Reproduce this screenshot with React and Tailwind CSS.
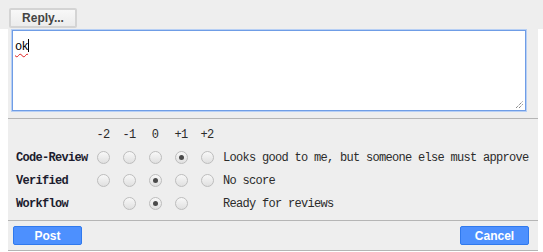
import React from "react";

const COLS = ["-2", "-1", "0", "+1", "+2"];

const ROWS = [
  { label: "Code-Review", opts: [true, true, true, true, true], sel: 3, text: "Looks good to me, but someone else must approve" },
  { label: "Verified", opts: [true, true, true, true, true], sel: 2, text: "No score" },
  { label: "Workflow", opts: [false, true, true, true, false], sel: 2, text: "Ready for reviews" },
];

const mono = "font-['Liberation_Mono','DejaVu_Sans_Mono',monospace] text-[12px] tracking-[-0.7px]";

function Radio({ checked }) {
  return (
    <span className="flex h-[13px] w-[13px] items-center justify-center rounded-full border border-[#bdbdbd] bg-gradient-to-b from-[#f8f8f8] to-[#e0e0e0]">
      {checked ? <span className="h-[5px] w-[5px] rounded-full bg-[#4a4a4a]" /> : null}
    </span>
  );
}

export default function App() {
  return (
    <div className="h-[252px] w-[543px] overflow-hidden bg-white font-['Liberation_Sans',Arial,sans-serif]">
      {/* top bar */}
      <div className="h-[29px] bg-[#eeeeee] pl-[9px] pt-[5px]">
        <button className="h-[20px] w-[68px] rounded-[2px] border-2 border-[#d4d4d4] bg-gradient-to-b from-[#f8f8f8] to-[#ececec] text-[12px] font-bold leading-none text-[#444]">
          Reply...
        </button>
      </div>

      <div className="ml-[8px] w-[530px] bg-[#eeeeee]">
        {/* message box */}
        <div className="border-b border-[#b5b5b5] pb-[7px] pl-[4px] pr-[12px] pt-[1px]">
          <div className="relative h-[81px] w-[514px] border border-[#6f9de6] bg-white shadow-[0_0_0_1px_#b7cff4] px-[2px] pt-[2px]">
            <span className={`${mono} leading-[14px] text-black underline decoration-wavy decoration-[#e02020] decoration-1 underline-offset-[3px]`}>
              ok
            </span>
            <span className="inline-block h-[13px] w-px translate-y-[2px] bg-black" />
            <svg className="absolute bottom-[1px] right-[1px]" width="9" height="9" viewBox="0 0 9 9">
              <path d="M1 8 L8 1 M4 8 L8 4" stroke="#555" strokeWidth="1" strokeDasharray="1 1" />
            </svg>
          </div>
        </div>

        {/* labels */}
        <div className={`border-b border-[#b5b5b5] pb-[5px] pl-[8px] pt-[5px] text-[#2b2b2b] ${mono}`}>
          <div className="grid h-[22px] grid-cols-[74px_repeat(5,26px)_1fr] items-center">
            <span />
            {COLS.map((c) => (
              <span key={c} className="text-center">
                {c}
              </span>
            ))}
            <span />
          </div>
          {ROWS.map((r) => (
            <div key={r.label} className="grid h-[23px] grid-cols-[74px_repeat(5,26px)_1fr] items-center">
              <span className="font-bold text-[#1c1c2e]">{r.label}</span>
              {r.opts.map((on, i) => (
                <span key={i} className="flex justify-center">
                  {on ? <Radio checked={r.sel === i} /> : null}
                </span>
              ))}
              <span className="whitespace-nowrap pl-[3px]">{r.text}</span>
            </div>
          ))}
        </div>

        {/* actions */}
        <div className="flex justify-between border-b border-[#b5b5b5] pb-[5px] pl-[5px] pr-[9px] pt-[5px]">
          <button className="h-[19px] w-[69px] rounded-[2px] border border-[#3079ed] bg-[#4d90fe] text-[12px] font-bold leading-none text-white">
            Post
          </button>
          <button className="h-[19px] w-[69px] rounded-[2px] border border-[#3079ed] bg-[#4d90fe] text-[12px] font-bold leading-none text-white">
            Cancel
          </button>
        </div>
      </div>
    </div>
  );
}
